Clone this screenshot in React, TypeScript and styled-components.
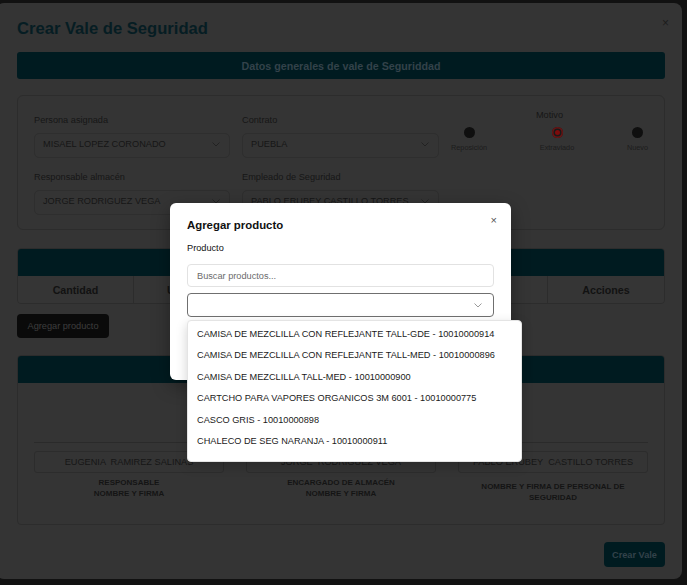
import React from 'react';
import styled, { createGlobalStyle } from 'styled-components';

const GlobalStyle = createGlobalStyle`
  html, body { margin: 0; padding: 0; background: #111; overflow: hidden; }
  body { font-family: "Liberation Sans", Arial, sans-serif; }
  * { box-sizing: border-box; }
`;

const Page = styled.div`
  position: relative;
  width: 687px;
  height: 585px;
  padding-top: 3px;
  overflow: hidden;
`;

const Dialog = styled.div`
  position: relative;
  margin-left: -4px;
  width: 686px;
  height: 576px;
  background: #343434;
  border-radius: 8px;
  padding: 16px 17px 0 21px;
  display: flex;
  flex-direction: column;
`;

const Title = styled.h2`
  margin: 0;
  font-size: 16.6px;
  line-height: 20px;
  font-weight: 700;
  color: #061d23;
`;

const CloseX = styled.span<{ $color: string; $top: number; $right: number; $size: number }>`
  position: absolute;
  top: ${p => p.$top}px;
  right: ${p => p.$right}px;
  font-size: ${p => p.$size}px;
  line-height: 1;
  color: ${p => p.$color};
`;

const HeaderBar = styled.div`
  margin-top: 13px;
  height: 27px;
  background: #001b20;
  border-radius: 3px;
  display: flex;
  align-items: center;
  justify-content: center;
  font-size: 10.7px;
  font-weight: 700;
  color: #33424a;
`;

const FormCard = styled.div`
  margin-top: 16px;
  border: 1px solid #2c2c2c;
  border-radius: 6px;
  padding: 19px 16px 14px;
  display: grid;
  grid-template-columns: 196px 197px 1fr;
  column-gap: 12px;
  row-gap: 14px;
`;

const Field = styled.div`
  display: flex;
  flex-direction: column;
`;

const Label = styled.div`
  font-size: 9.2px;
  line-height: 11px;
  color: #161616;
  margin-bottom: 7px;
`;

const SelectBox = styled.div`
  height: 25px;
  border: 1px solid #2e2e2e;
  border-radius: 5px;
  padding: 0 9px 3px 8px;
  display: flex;
  align-items: center;
  justify-content: space-between;
  font-size: 9.2px;
  color: #161616;
  white-space: nowrap;
  overflow: hidden;
`;

const Chevron = ({ color }: { color: string }) => (
  <svg width="8" height="5" viewBox="0 0 8 5" style={{ flexShrink: 0 }}>
    <polyline points="0.5,0.5 4,4 7.5,0.5" fill="none" stroke={color} strokeWidth="1" />
  </svg>
);

const RadioGroup = styled.div`
  margin-top: -5px;
  display: flex;
  flex-direction: column;
`;

const GroupLabel = styled.div`
  text-align: center;
  font-size: 9.2px;
  line-height: 11px;
  color: #161616;
`;

const RadioRow = styled.div`
  margin-top: 6px;
  display: flex;
  justify-content: space-between;
`;

const RadioItem = styled.div`
  display: flex;
  flex-direction: column;
  align-items: center;
`;

const RadioDot = styled.span<{ $checked?: boolean }>`
  width: 11px;
  height: 11px;
  border-radius: 50%;
  background: ${p => (p.$checked ? '#7d0c0c' : '#0f0f0f')};
  box-shadow: ${p => (p.$checked ? 'inset 0 0 0 1.5px #6a1414, inset 0 0 0 3px #1a1a1a' : 'none')};
`;

const RadioText = styled.span`
  margin-top: 5px;
  font-size: 7.3px;
  line-height: 9px;
  color: #1c1c1c;
`;

const TableWrap = styled.div`
  margin-top: 18px;
  border: 1px solid #2c2c2c;
  border-radius: 4px;
  overflow: hidden;
`;

const TealHead = styled.div`
  height: 27px;
  background: #001b20;
`;

const HeadRow = styled.div`
  display: grid;
  grid-template-columns: 115px 115px 1fr 117px;
  height: 27px;
  background: #353535;
`;

const HeadCell = styled.div`
  display: flex;
  align-items: center;
  justify-content: center;
  font-size: 10.7px;
  font-weight: 700;
  color: #121212;
  white-space: nowrap;
  & + & { border-left: 1px solid #2c2c2c; }
`;

const DarkButton = styled.button`
  margin-top: 10px;
  align-self: flex-start;
  width: 92px;
  height: 24px;
  border: none;
  border-radius: 4px;
  background: #0a0a0a;
  color: #3e3e3e;
  font-family: inherit;
  font-size: 9.2px;
  padding: 0;
`;

const SigCard = styled.div`
  margin-top: 17px;
  border: 1px solid #2c2c2c;
  border-radius: 4px;
  overflow: hidden;
`;

const SigBody = styled.div`
  display: grid;
  grid-template-columns: repeat(3, 190px);
  column-gap: 22px;
  padding: 0 16px 21px;
`;

const SigCol = styled.div`
  display: flex;
  flex-direction: column;
`;

const SigArea = styled.div`
  height: 60px;
  border-bottom: 1px solid #2a2a2a;
`;

const NameBox = styled.div`
  margin-top: 8px;
  height: 22px;
  border: 1px solid #2c2c2c;
  border-radius: 3px;
  display: flex;
  align-items: center;
  justify-content: center;
  font-size: 9.2px;
  color: #161616;
  white-space: pre;
`;

const RoleLabel = styled.div<{ $offset?: number }>`
  margin-top: ${p => 5 + (p.$offset || 0)}px;
  font-size: 8px;
  line-height: 10.5px;
  font-weight: 700;
  text-align: center;
  color: #141414;
`;

const PrimaryButton = styled.button`
  margin-top: 17px;
  align-self: flex-end;
  width: 61px;
  height: 25px;
  border: none;
  border-radius: 4px;
  background: #001b20;
  color: #33424a;
  font-family: inherit;
  font-size: 9.2px;
  font-weight: 700;
  padding: 0;
`;

/* inner modal */
const InnerModal = styled.div`
  position: absolute;
  left: 170px;
  top: 203px;
  width: 341px;
  height: 177px;
  background: #fff;
  border-radius: 6px;
  padding: 15px 17px;
  box-shadow: 0 6px 18px rgba(0, 0, 0, 0.35);
  display: flex;
  flex-direction: column;
`;

const InnerTitle = styled.div`
  font-size: 11.4px;
  line-height: 14px;
  font-weight: 700;
  color: #111;
`;

const InnerLabel = styled.div`
  margin-top: 10.5px;
  font-size: 9.2px;
  line-height: 11px;
  color: #111;
`;

const SearchInput = styled.input`
  margin-top: 10.5px;
  height: 23px;
  border: 1px solid #e2e2e2;
  border-radius: 4px;
  padding: 0 9px;
  font-family: inherit;
  font-size: 9.2px;
  color: #111;
  outline: none;
  &::placeholder { color: #6b6b6b; }
`;

const ProductSelect = styled.div`
  margin-top: 6px;
  height: 24px;
  border: 1px solid #6f6f6f;
  border-radius: 4px;
  display: flex;
  align-items: center;
  justify-content: flex-end;
  padding-right: 11px;
`;

const Dropdown = styled.ul`
  position: absolute;
  left: 17px;
  top: 117px;
  width: 335px;
  height: 142px;
  margin: 0;
  padding: 3px 0 0;
  list-style: none;
  background: #fff;
  border: 1px solid #e4e4e4;
  border-radius: 4px;
  box-shadow: 0 4px 12px rgba(0, 0, 0, 0.18);
`;

const Option = styled.li`
  height: 21.4px;
  line-height: 21.4px;
  padding-left: 9px;
  font-size: 9.2px;
  color: #1a1a1a;
  white-space: nowrap;
`;

const products = [
  'CAMISA DE MEZCLILLA CON REFLEJANTE TALL-GDE - 10010000914',
  'CAMISA DE MEZCLILLA CON REFLEJANTE TALL-MED - 10010000896',
  'CAMISA DE MEZCLILLA TALL-MED - 10010000900',
  'CARTCHO PARA VAPORES ORGANICOS 3M 6001 - 10010000775',
  'CASCO GRIS - 10010000898',
  'CHALECO DE SEG NARANJA - 10010000911',
];

const signatures = [
  { name: 'EUGENIA  RAMIREZ SALINAS', role: ['RESPONSABLE', 'NOMBRE Y FIRMA'], offset: 0 },
  { name: 'JORGE  RODRIGUEZ VEGA', role: ['ENCARGADO DE ALMACÉN', 'NOMBRE Y FIRMA'], offset: 0 },
  { name: 'PABLO ERUBEY  CASTILLO TORRES', role: ['NOMBRE Y FIRMA DE PERSONAL DE', 'SEGURIDAD'], offset: 4 },
];

export default function App() {
  return (
    <Page>
      <GlobalStyle />
      <Dialog>
        <CloseX $color="#1c1c1c" $top={14} $right={13} $size={12}>×</CloseX>
        <Title>Crear Vale de Seguridad</Title>
        <HeaderBar>Datos generales de vale de Seguriddad</HeaderBar>

        <FormCard>
          <Field>
            <Label>Persona asignada</Label>
            <SelectBox>MISAEL LOPEZ CORONADO<Chevron color="#222" /></SelectBox>
          </Field>
          <Field>
            <Label>Contrato</Label>
            <SelectBox>PUEBLA<Chevron color="#222" /></SelectBox>
          </Field>
          <RadioGroup>
            <GroupLabel>Motivo</GroupLabel>
            <RadioRow>
              <RadioItem><RadioDot /><RadioText>Reposición</RadioText></RadioItem>
              <RadioItem><RadioDot $checked /><RadioText>Extraviado</RadioText></RadioItem>
              <RadioItem><RadioDot /><RadioText>Nuevo</RadioText></RadioItem>
            </RadioRow>
          </RadioGroup>
          <Field>
            <Label>Responsable almacén</Label>
            <SelectBox>JORGE RODRIGUEZ VEGA<Chevron color="#222" /></SelectBox>
          </Field>
          <Field>
            <Label>Empleado de Seguridad</Label>
            <SelectBox>PABLO ERUBEY CASTILLO TORRES<Chevron color="#222" /></SelectBox>
          </Field>
        </FormCard>

        <TableWrap>
          <TealHead />
          <HeadRow>
            <HeadCell>Cantidad</HeadCell>
            <HeadCell>Unidades</HeadCell>
            <HeadCell>Descripción</HeadCell>
            <HeadCell>Acciones</HeadCell>
          </HeadRow>
        </TableWrap>
        <DarkButton>Agregar producto</DarkButton>

        <SigCard>
          <TealHead />
          <SigBody>
            {signatures.map(s => (
              <SigCol key={s.name}>
                <SigArea />
                <NameBox>{s.name}</NameBox>
                <RoleLabel $offset={s.offset}>{s.role[0]}<br />{s.role[1]}</RoleLabel>
              </SigCol>
            ))}
          </SigBody>
        </SigCard>

        <PrimaryButton>Crear Vale</PrimaryButton>
      </Dialog>

      <InnerModal>
        <CloseX $color="#555" $top={12} $right={14} $size={11}>×</CloseX>
        <InnerTitle>Agregar producto</InnerTitle>
        <InnerLabel>Producto</InnerLabel>
        <SearchInput placeholder="Buscar productos..." readOnly />
        <ProductSelect><Chevron color="#9a9a9a" /></ProductSelect>
        <Dropdown>
          {products.map(p => <Option key={p}>{p}</Option>)}
        </Dropdown>
      </InnerModal>
    </Page>
  );
}
